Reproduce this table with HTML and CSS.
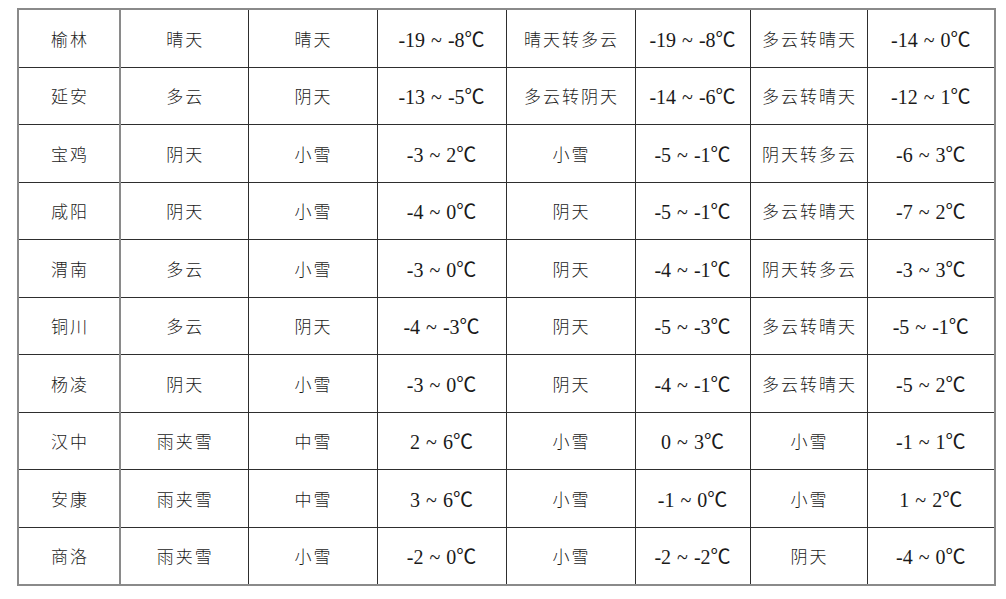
FILE: index.html
```html
<!DOCTYPE html>
<html lang="zh">
<head>
<meta charset="utf-8">
<title>陕西天气预报</title>
<link rel="stylesheet" href="styles.css">
</head>
<body>
<table class="wx">
  <colgroup>
    <col class="c1"><col class="c2"><col class="c3"><col class="c4"><col class="c5"><col class="c6"><col class="c7"><col class="c8">
  </colgroup>
  <tbody>
    <tr><td class="city">榆林</td><td>晴天</td><td>晴天</td><td class="t">-19 ~ -8℃</td><td>晴天转多云</td><td class="t">-19 ~ -8℃</td><td>多云转晴天</td><td class="t">-14 ~ 0℃</td></tr>
    <tr><td class="city">延安</td><td>多云</td><td>阴天</td><td class="t">-13 ~ -5℃</td><td>多云转阴天</td><td class="t">-14 ~ -6℃</td><td>多云转晴天</td><td class="t">-12 ~ 1℃</td></tr>
    <tr><td class="city">宝鸡</td><td>阴天</td><td>小雪</td><td class="t">-3 ~ 2℃</td><td>小雪</td><td class="t">-5 ~ -1℃</td><td>阴天转多云</td><td class="t">-6 ~ 3℃</td></tr>
    <tr><td class="city">咸阳</td><td>阴天</td><td>小雪</td><td class="t">-4 ~ 0℃</td><td>阴天</td><td class="t">-5 ~ -1℃</td><td>多云转晴天</td><td class="t">-7 ~ 2℃</td></tr>
    <tr><td class="city">渭南</td><td>多云</td><td>小雪</td><td class="t">-3 ~ 0℃</td><td>阴天</td><td class="t">-4 ~ -1℃</td><td>阴天转多云</td><td class="t">-3 ~ 3℃</td></tr>
    <tr><td class="city">铜川</td><td>多云</td><td>阴天</td><td class="t">-4 ~ -3℃</td><td>阴天</td><td class="t">-5 ~ -3℃</td><td>多云转晴天</td><td class="t">-5 ~ -1℃</td></tr>
    <tr><td class="city">杨凌</td><td>阴天</td><td>小雪</td><td class="t">-3 ~ 0℃</td><td>阴天</td><td class="t">-4 ~ -1℃</td><td>多云转晴天</td><td class="t">-5 ~ 2℃</td></tr>
    <tr><td class="city">汉中</td><td>雨夹雪</td><td>中雪</td><td class="t">2 ~ 6℃</td><td>小雪</td><td class="t">0 ~ 3℃</td><td>小雪</td><td class="t">-1 ~ 1℃</td></tr>
    <tr><td class="city">安康</td><td>雨夹雪</td><td>中雪</td><td class="t">3 ~ 6℃</td><td>小雪</td><td class="t">-1 ~ 0℃</td><td>小雪</td><td class="t">1 ~ 2℃</td></tr>
    <tr><td class="city">商洛</td><td>雨夹雪</td><td>小雪</td><td class="t">-2 ~ 0℃</td><td>小雪</td><td class="t">-2 ~ -2℃</td><td>阴天</td><td class="t">-4 ~ 0℃</td></tr>
  </tbody>
</table>
</body>
</html>
```

FILE: styles.css
```css
html, body {
  margin: 0;
  padding: 0;
  background: #ffffff;
}

body {
  padding: 8px 0 0 17px;
}

.wx {
  border-collapse: collapse;
  table-layout: fixed;
  width: 979px;
  border: 2px solid #8a8a8a;
  color: #1a1a1a;
}

.c1 { width: 102px; }
.c2 { width: 128px; }
.c3 { width: 129px; }
.c4 { width: 129px; }
.c5 { width: 129px; }
.c6 { width: 115px; }
.c7 { width: 117px; }
.c8 { width: 128px; }

.wx td {
  height: 56.5px;
  padding: 0;
  border: 1px solid #2e2e2e;
  text-align: center;
  vertical-align: middle;
  font-family: "Noto Sans CJK SC", sans-serif;
  font-weight: 300;
  font-size: 17px;
  letter-spacing: 2px;
  text-indent: 2px;
  white-space: nowrap;
}

.wx td.city {
  border-right: 2px solid #8a8a8a;
}

.wx td.t {
  font-family: "Liberation Serif", "Noto Sans CJK SC", serif;
  font-weight: 400;
  font-size: 20px;
  letter-spacing: 0;
  word-spacing: 1px;
  text-indent: 0;
}
```
